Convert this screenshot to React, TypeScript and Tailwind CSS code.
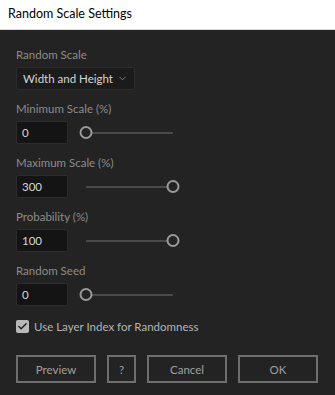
import { Check, ChevronDown } from 'lucide-react'

const FONT = { fontFamily: 'Lato, "Noto Sans", sans-serif' }

function Slider({ value }: { value: number }) {
  // knob travels between x=6 and x=93 inside a 99px box
  const left = 6 + (value / 100) * 87
  return (
    <div className="relative ml-3 h-[23px] w-[99px]">
      <div className="absolute left-[6px] right-[6px] top-[11px] h-[2px] bg-[#4a4a4a]" />
      <div
        className="absolute top-[5px] h-[13px] w-[13px] -translate-x-1/2 rounded-full border-2 border-[#9a9a9a] bg-[#232323]"
        style={{ left }}
      />
    </div>
  )
}

function NumberField({ label, value, pos }: { label: string; value: string; pos: number }) {
  return (
    <div className="flex flex-col gap-1">
      <span className="h-4 text-[11.5px] leading-4 text-[#8c8c8c]">{label}</span>
      <div className="flex items-center">
        <div className="flex h-[23px] w-[52px] items-center rounded-[2px] border border-[#2c2c2c] bg-[#141414] px-[5px] text-[11.5px] text-[#d6d6d6]">
          {value}
        </div>
        <Slider value={pos} />
      </div>
    </div>
  )
}

export default function App() {
  return (
    <div className="flex h-[395px] w-[335px] flex-col bg-[#232323]" style={FONT}>
      <div className="flex h-[30px] items-center border-b border-[#d9d9d9] bg-white px-2 text-[12.5px] text-black">
        Random Scale Settings
      </div>

      <div className="flex flex-col gap-[11px] px-4 pt-[17px]">
        <div className="flex flex-col gap-1">
          <span className="h-4 text-[11.5px] leading-4 text-[#8c8c8c]">Random Scale</span>
          <div className="flex h-[23px] w-[119px] items-center justify-between whitespace-nowrap rounded-[2px] border border-[#2c2c2c] bg-[#1b1b1b] pl-[6px] pr-[6px] text-[11.5px] text-[#d6d6d6]">
            <span>Width and Height</span>
            <ChevronDown size={11} strokeWidth={1.5} className="text-[#a0a0a0]" />
          </div>
        </div>

        <NumberField label="Minimum Scale (%)" value="0" pos={0} />
        <NumberField label="Maximum Scale (%)" value="300" pos={100} />
        <NumberField label="Probability (%)" value="100" pos={100} />
        <NumberField label="Random Seed" value="0" pos={0} />

        <label className="mt-[1px] flex items-center gap-[5px] text-[11.5px] text-[#b4b4b4]">
          <span className="flex h-[13px] w-[13px] items-center justify-center rounded-[2px] bg-[#b8b8b8]">
            <Check size={11} strokeWidth={3} className="text-[#1e1e1e]" />
          </span>
          Use Layer Index for Randomness
        </label>
      </div>

      <div className="mt-[20px] flex gap-[11px] px-4 text-[11.5px] text-[#a0a0a0]">
        <button className="h-[28px] w-[80px] border-2 border-[#6e6e6e]">Preview</button>
        <button className="h-[28px] w-[29px] border-2 border-[#6e6e6e]">?</button>
        <button className="h-[28px] w-[80px] border-2 border-[#6e6e6e]">Cancel</button>
        <button className="h-[28px] w-[80px] border-2 border-[#6e6e6e]">OK</button>
      </div>
    </div>
  )
}
